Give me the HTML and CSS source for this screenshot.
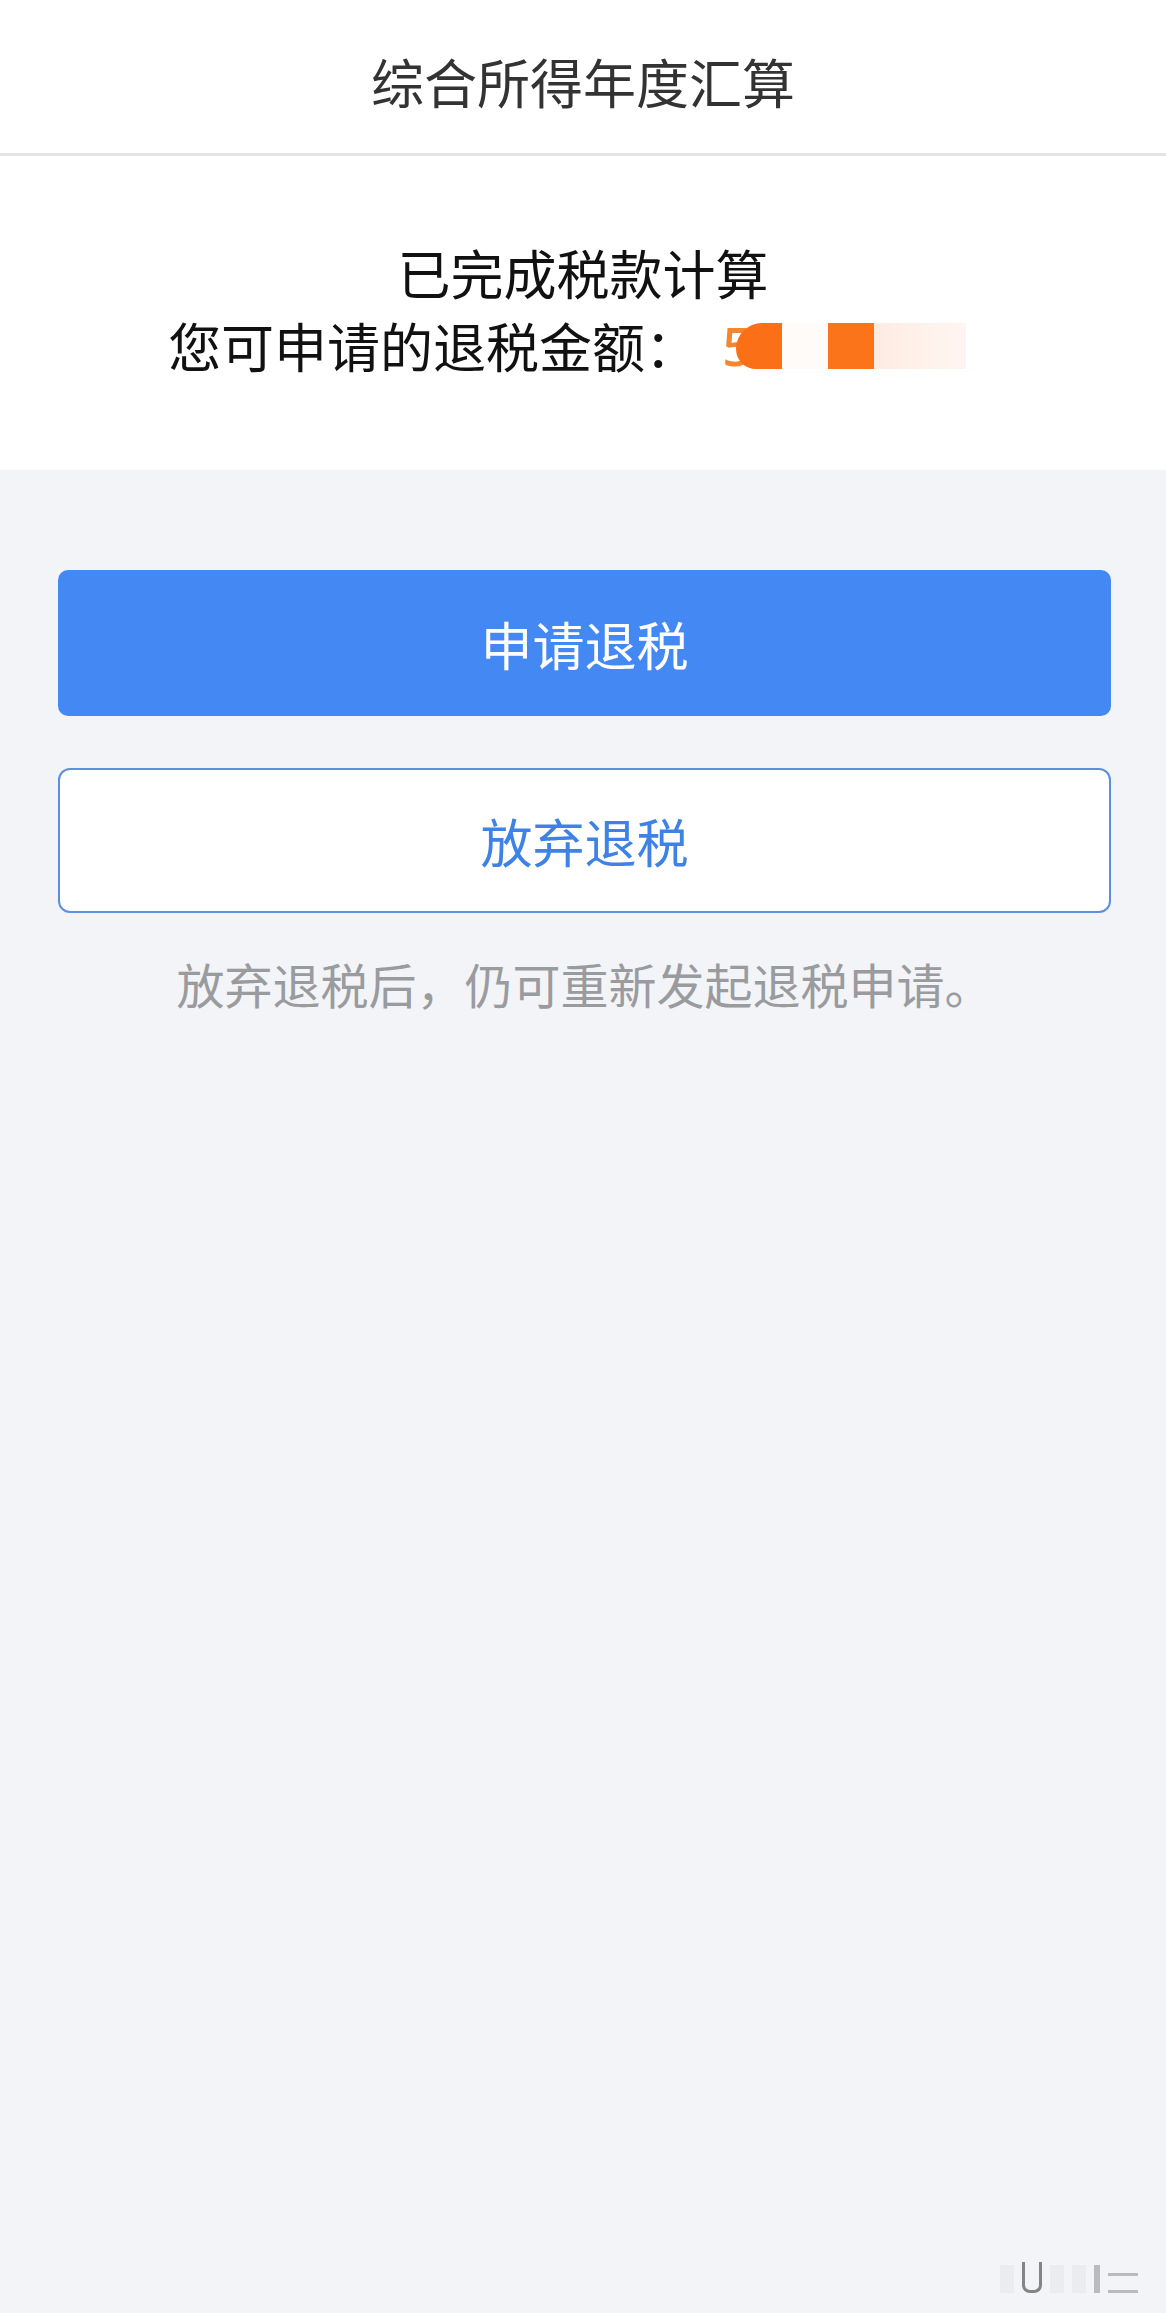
FILE: index.html
```html
<!DOCTYPE html>
<html lang="zh-CN">
<head>
    <meta charset="UTF-8">
    <meta name="viewport" content="width=device-width, initial-scale=1.0">
    <title>综合所得年度汇算</title>
    <link rel="stylesheet" href="styles.css">
</head>
<body>

    <header class="nav-bar">
        <h1 class="nav-title">综合所得年度汇算</h1>
    </header>

    <section class="summary">
        <p class="summary-line">已完成税款计算</p>
        <p class="summary-line">您可申请的退税金额：<span class="amount"><span class="amount-digit">5</span><span class="blot blot-round"></span><span class="blot blot-pale"></span><span class="blot blot-solid"></span><span class="blot blot-peach"></span></span></p>
    </section>

    <main class="actions">
        <button class="btn btn-primary">申请退税</button>
        <button class="btn btn-outline">放弃退税</button>
        <p class="note">放弃退税后，仍可重新发起退税申请。</p>
    </main>

    <div class="watermark">
        <span></span><span class="cup"></span><span></span><span></span><span class="dark"></span><span class="lines"></span>
    </div>

</body>
</html>
```

FILE: styles.css
```css
body {
    margin: 0;
    padding: 0;
    min-height: 2313px;
    background-color: #f2f4f8;
    font-family: "Noto Sans CJK SC", "Noto Sans", sans-serif;
    position: relative;
}
.nav-bar {
    background: #ffffff;
    height: 153px;
    border-bottom: 3px solid #e4e4e6;
    display: flex;
    align-items: center;
    justify-content: center;
}
.nav-title {
    margin: 0;
    padding-top: 10px;
    font-size: 53px;
    font-weight: normal;
    color: #333333;
    line-height: 1;
}
.summary {
    background: #ffffff;
    padding: 80px 0 88px;
    text-align: center;
}
.summary-line {
    margin: 0;
    font-size: 53px;
    line-height: 73px;
    color: #111111;
}
.amount {
    display: inline-flex;
    align-items: center;
    vertical-align: 2px;
    margin-left: 24px;
    margin-right: 32px;
    height: 46px;
}
.amount-digit {
    display: inline-block;
    color: #f4862f;
    font-family: "Noto Sans", sans-serif;
    font-size: 52px;
    font-weight: 500;
    line-height: 46px;
}
.blot {
    display: inline-block;
    height: 46px;
}
.blot-round {
    width: 46px;
    margin-left: -16px;
    background: #fb6f17;
    border-radius: 26px 0 0 20px;
}
.blot-pale {
    width: 46px;
    background: #fffbf9;
}
.blot-solid {
    width: 46px;
    background: #fb7419;
}
.blot-peach {
    width: 92px;
    background: linear-gradient(90deg, #fdebe1, #fff2ec 60%, #fff5f0);
}
.actions {
    padding: 100px 55px 0 58px;
    display: flex;
    flex-direction: column;
}
.btn {
    font-family: inherit;
    font-size: 52px;
    height: 146px;
    border-radius: 10px;
    cursor: pointer;
}
.btn-primary {
    background-color: #4488f4;
    border: none;
    color: #ffffff;
}
.btn-outline {
    margin-top: 52px;
    height: 145px;
    background: #ffffff;
    border: 2px solid #5b8fe0;
    border-radius: 12px;
    color: #3f82e6;
}
.note {
    margin: 40px 0 0;
    text-align: center;
    font-size: 48px;
    line-height: 60px;
    color: #9a9b9e;
}
.watermark {
    position: absolute;
    right: 28px;
    bottom: 20px;
    display: flex;
    align-items: flex-end;
    gap: 8px;
    opacity: 0.55;
}
.watermark span {
    width: 14px;
    height: 28px;
    background: #e4e6ea;
}
.watermark span.cup {
    width: 14px;
    background: transparent;
    border: 3px solid #2a2a2a;
    border-top: none;
    border-radius: 0 0 8px 8px;
}
.watermark span.dark {
    background: #8c8e92;
    width: 6px;
}
.watermark span.lines {
    width: 30px;
    height: 14px;
    border-top: 3px solid #8c8e92;
    border-bottom: 3px solid #8c8e92;
    background: transparent;
}
```
